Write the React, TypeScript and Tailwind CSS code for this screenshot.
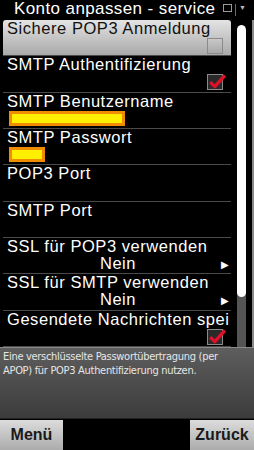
import React from "react";

type Row =
  | { kind: "check"; label: string; checked: boolean; active?: boolean }
  | { kind: "field"; label: string; bar?: number }
  | { kind: "choice"; label: string; value: string };

const rows: Row[] = [
  { kind: "check", label: "Sichere POP3 Anmeldung", checked: false, active: true },
  { kind: "check", label: "SMTP Authentifizierung", checked: true },
  { kind: "field", label: "SMTP Benutzername", bar: 116 },
  { kind: "field", label: "SMTP Passwort", bar: 36 },
  { kind: "field", label: "POP3 Port" },
  { kind: "field", label: "SMTP Port" },
  { kind: "choice", label: "SSL für POP3 verwenden", value: "Nein" },
  { kind: "choice", label: "SSL für SMTP verwenden", value: "Nein" },
  { kind: "check", label: "Gesendete Nachrichten speichern", checked: true },
];

function Checkbox({ checked }: { checked: boolean }) {
  return (
    <div
      className={
        "relative h-[16px] w-[16px] border border-[#8a8a8a] " +
        (checked ? "bg-[#2a2a2a]" : "bg-gradient-to-b from-[#c8c8c8] to-[#a8a8a8]")
      }
    >
      {checked && (
        <svg viewBox="0 0 16 16" className="absolute -top-[3px] left-0 h-[18px] w-[18px]">
          <path d="M2 9 L6 13 L15 3" fill="none" stroke="#e0102a" strokeWidth="3" strokeLinejoin="round" />
        </svg>
      )}
    </div>
  );
}

function ListRow({ row }: { row: Row }) {
  const active = row.kind === "check" && row.active;
  return (
    <div
      className={
        "flex h-[36.33px] flex-col border-b border-[#4a4a4a] pl-[4px] pr-[2px] " +
        (active
          ? "rounded-t-[3px] bg-gradient-to-b from-[#e4e4e4] to-[#a9a9a9] text-[#111]"
          : "text-white")
      }
    >
      <div className="overflow-hidden whitespace-nowrap text-[16.5px] leading-[17px] tracking-[0.55px]">
        {row.label}
      </div>
      {row.kind === "check" && (
        <div className="flex justify-end pr-[6px] pt-[1px]">
          <Checkbox checked={row.checked} />
        </div>
      )}
      {row.kind === "field" && row.bar && (
        <div className="pl-[2px] pt-[1px]">
          <div
            className="h-[15px] border-[3px] border-[#f08c00] bg-[#fff000]"
            style={{ width: row.bar }}
          />
        </div>
      )}
      {row.kind === "choice" && (
        <div className="relative flex justify-center text-[16.5px] leading-[17px] tracking-[0.5px]">
          <span>{row.value}</span>
          <span className="absolute right-[0px] top-[1px] text-[10px]">▶</span>
        </div>
      )}
    </div>
  );
}

export default function App() {
  return (
    <div
      className="flex h-[450px] w-[254px] flex-col overflow-hidden bg-black"
      style={{ fontFamily: '"Liberation Sans", Arial, sans-serif' }}
    >
      {/* title */}
      <div className="relative flex h-[20px] items-start">
        <div className="pl-[14px] text-[17px] leading-[18px] tracking-[0.4px] text-white">
          Konto anpassen - service
        </div>
        <div className="absolute right-[8px] top-[4px] flex items-start gap-[3px]">
          <div className="h-[8px] w-[9px] border border-[#9a9a9a]" />
          <div className="h-[12px] w-px bg-[#6a6a6a]" />
          <span className="text-[7px] leading-[8px] text-[#bbb]">▼</span>
        </div>
      </div>

      {/* list + scrollbar */}
      <div className="flex h-[327px] border-r-2 border-[#8a8a8a]">
        <div className="w-[231px] pl-[3px]">
          {rows.map((r) => (
            <ListRow key={r.label} row={r} />
          ))}
        </div>
        <div className="flex flex-1 justify-center pt-[5px]">
          <div className="flex h-[328px] w-[9px] flex-col overflow-hidden rounded-full bg-[#555]">
            <div className="h-[272px] rounded-full bg-white" />
          </div>
        </div>
      </div>

      {/* description */}
      <div className="h-[71px] border-t border-[#8a8a8a] bg-gradient-to-b from-[#5e5e5e] to-[#3c3c3c] px-[3px] pt-[2px]">
        <p
          className="whitespace-nowrap text-[11px] leading-[14px] tracking-[-0.3px] text-[#e6e6e6]"
          style={{ fontFamily: '"DejaVu Sans Condensed", "Liberation Sans Narrow", sans-serif', fontStretch: "condensed" }}
        >
          Eine verschlüsselte Passwortübertragung (per
          <br />
          APOP) für POP3 Authentifizierung nutzen.
        </p>
      </div>

      {/* softkeys */}
      <div className="flex flex-1 items-end justify-between border-t border-[#222]">
        <div className="flex h-[30px] w-[63px] items-center justify-center bg-gradient-to-b from-[#dcdcdc] to-[#acacac] text-[16px] font-bold text-[#1a1a1a]">
          Menü
        </div>
        <div className="flex h-[30px] w-[64px] items-center justify-center bg-gradient-to-b from-[#dcdcdc] to-[#acacac] text-[16px] font-bold text-[#1a1a1a]">
          Zurück
        </div>
      </div>
    </div>
  );
}
